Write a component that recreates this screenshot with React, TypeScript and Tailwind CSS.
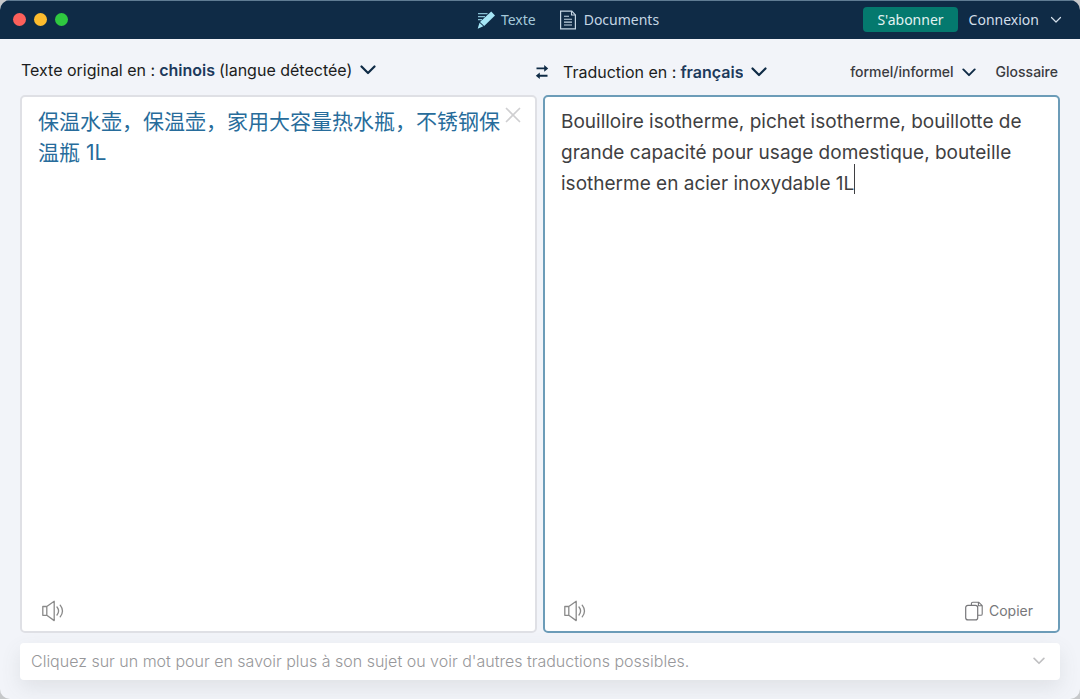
import { useState } from 'react';

type IconProps = { className?: string };

function Chevron({ className }: IconProps) {
  return (
    <svg viewBox="0 0 16 10" fill="none" stroke="currentColor" className={className} aria-hidden="true">
      <path d="M1.5 1.5 8 8l6.5-6.5" strokeWidth="2.2" strokeLinecap="round" strokeLinejoin="round" />
    </svg>
  );
}

function ThinChevron({ className }: IconProps) {
  return (
    <svg viewBox="0 0 12 8" fill="none" stroke="currentColor" className={className} aria-hidden="true">
      <path d="M1.5 1.5 6 6l4.5-4.5" strokeWidth="1.2" strokeLinecap="round" strokeLinejoin="round" />
    </svg>
  );
}

function PencilIcon({ className }: IconProps) {
  return (
    <svg viewBox="0 0 18 18" fill="none" className={className} aria-hidden="true">
      <path d="M1 2.7h9.5M1 5.7h7M1 8.7h4" stroke="currentColor" strokeWidth="1.2" opacity="0.8" />
      <path d="M14.2.6 18 4.4 7.2 15 3 11Z" fill="currentColor" />
      <path d="M2.5 11.8 6.3 15.3.7 17.7Z" fill="currentColor" />
    </svg>
  );
}

function DocumentIcon({ className }: IconProps) {
  return (
    <svg viewBox="0 0 16 20" fill="none" stroke="currentColor" className={className} aria-hidden="true">
      <path d="M.6 1.1h11.2l3.6 3.8v13.9H.6Z" strokeWidth="1.2" />
      <path d="M11.5 1.2V5h3.8" strokeWidth="1.1" />
      <path d="M4 6.3h5M4 9.2h8M4 12.1h8M4 15h8" strokeWidth="1.1" />
    </svg>
  );
}

function SwapIcon({ className }: IconProps) {
  return (
    <svg viewBox="0 0 14 14" className={className} aria-hidden="true">
      <path d="M1.5 3.4H10M4 10.8h8.5" stroke="currentColor" strokeWidth="1.9" fill="none" />
      <path d="M9.2 0 13.2 3.4 9.2 6.8ZM4.8 7.4.8 10.8l4 3.2Z" fill="currentColor" />
    </svg>
  );
}

function SpeakerIcon({ className }: IconProps) {
  return (
    <svg viewBox="0 0 22 22" fill="none" stroke="currentColor" className={className} aria-hidden="true">
      <path d="M.8 6.5h4v8.8h-4ZM4.8 6.5l7.4-5.2v19.3l-7.4-5.3" strokeWidth="1.3" strokeLinejoin="round" />
      <path d="M15 7c1.9 2.4 1.9 5.6 0 8M18.2 5.2c2.8 3.6 2.8 8.1 0 11.6" strokeWidth="1.3" strokeLinecap="round" />
    </svg>
  );
}

function CopyIcon({ className }: IconProps) {
  return (
    <svg viewBox="0 0 18 20" fill="none" stroke="currentColor" className={className} aria-hidden="true">
      <rect x=".7" y="4.3" width="12" height="14.6" rx="2.2" strokeWidth="1.2" />
      <path d="M6.4 4.2V2.6c0-.9.5-1.4 1.4-1.4h5.8l3.6 3.4v8.3c0 .9-.5 1.4-1.4 1.4h-3M13.4 1.4v3.3h3.6" strokeWidth="1.1" strokeLinejoin="round" />
    </svg>
  );
}

function CloseIcon({ className }: IconProps) {
  return (
    <svg viewBox="0 0 16 16" fill="none" stroke="currentColor" className={className} aria-hidden="true">
      <path d="m1.5 1.5 13 13M14.5 1.5l-13 13" strokeWidth="1.7" strokeLinecap="round" />
    </svg>
  );
}

function TitleBar() {
  return (
    <header className="grid h-[39px] shrink-0 grid-cols-[1fr_auto_1fr] items-center border-t border-[#5f7c93] bg-[#0f2b46] pb-px font-['Noto_Sans','Open_Sans',sans-serif] text-[14px] leading-5 text-[#c5d6e4]">
      <div className="flex gap-2 pl-[13px]">
        <button aria-label="Fermer" className="size-[13px] rounded-full bg-[#fc605b]" />
        <button aria-label="Réduire" className="size-[13px] rounded-full bg-[#fdbc2e]" />
        <button aria-label="Agrandir" className="size-[13px] rounded-full bg-[#2fc840]" />
      </div>
      <nav className="flex items-center gap-6 pl-14">
        <a href="#texte" className="flex items-center gap-1.5 text-[#a5c9da]">
          <PencilIcon className="size-[18px] text-[#a5e6f6]" />
          Texte
        </a>
        <a href="#documents" className="flex items-center gap-2">
          <DocumentIcon className="h-5 w-4" />
          Documents
        </a>
      </nav>
      <div className="flex items-center justify-end gap-[11px] pr-[18px]">
        <button className="h-[25px] rounded bg-[#04796e] px-3.5 text-[#e2f2f2]">S'abonner</button>
        <button className="flex items-center gap-[11px] text-[#d3dfea]">
          Connexion
          <ThinChevron className="h-2 w-3" />
        </button>
      </div>
    </header>
  );
}

export default function App() {
  const [source, setSource] = useState('保温水壶，保温壶，家用大容量热水瓶，不锈钢保温瓶 1L');
  const [target, setTarget] = useState(
    'Bouilloire isotherme, pichet isotherme, bouillotte de grande capacité pour usage domestique, bouteille isotherme en acier inoxydable 1L',
  );

  return (
    <div className="min-h-screen bg-[#c6c8ca] font-['Inter','Noto_Sans_CJK_SC',sans-serif]">
      <div className="flex min-h-screen flex-col overflow-hidden rounded-[10px] bg-[#f2f4f9]">
        <TitleBar />
        <main className="flex grow flex-col px-5 pb-[19px]">
          <div className="grid grow grid-cols-2 grid-rows-[56px_1fr] gap-x-1.5">
            <div className="flex items-center pt-2 pb-[3px] pl-px text-[16px] leading-5 text-[#1b1c20]">
              <label htmlFor="source-lang" className="mr-1">Texte original en :</label>
              <select id="source-lang" className="field-sizing-content appearance-none font-semibold text-[#1d3a5c]">
                <option>chinois</option>
              </select>
              <span className="ml-1">(langue détectée)</span>
              <Chevron className="ml-2 h-[10px] w-4 text-[#0f2b46]" />
            </div>

            <div className="flex items-center justify-between pt-[10px] pr-0.5 text-[#1b1c20]">
              <div className="-ml-2 flex items-center text-[16px] leading-5">
                <button aria-label="Inverser les langues" className="mr-3.5 text-[#0f2b46]">
                  <SwapIcon className="size-3.5" />
                </button>
                <label htmlFor="target-lang" className="mr-1">Traduction en :</label>
                <select id="target-lang" className="field-sizing-content appearance-none font-semibold text-[#1d3a5c]">
                  <option>français</option>
                </select>
                <Chevron className="ml-2 h-[10px] w-4 text-[#0f2b46]" />
              </div>
              <div className="flex items-center text-[14px] leading-5 font-medium text-[#3a3b40]">
                <select aria-label="Registre" className="field-sizing-content appearance-none">
                  <option>formel/informel</option>
                </select>
                <Chevron className="ml-2 h-[9px] w-3.5 text-[#0f2b46]" />
                <button className="ml-5">Glossaire</button>
              </div>
            </div>

            <section className="flex flex-col rounded-[5px] border-2 border-[#dfe0e5] bg-white pt-[9px] pr-3.5 pb-[9px] pl-4">
              <div className="flex grow items-start">
                <textarea
                  aria-label="Texte original"
                  value={source}
                  onChange={(e) => setSource(e.target.value)}
                  className="h-full grow resize-none self-stretch text-[21px] leading-[31px] text-[#276c9b] outline-none"
                />
                <button aria-label="Effacer le texte" onClick={() => setSource('')} className="ml-1 pt-px text-[#cfcfd1]">
                  <CloseIcon className="size-4" />
                </button>
              </div>
              <div className="flex items-center pl-1">
                <button aria-label="Écouter le texte original" className="text-[#8a8a8a]">
                  <SpeakerIcon className="size-[22px]" />
                </button>
              </div>
            </section>

            <section className="flex flex-col rounded-[5px] border-2 border-[#6c9cb8] bg-white pt-[9px] pr-[25px] pb-[9px] pl-4">
              <div className="relative flex grow">
                <textarea
                  aria-label="Traduction"
                  value={target}
                  onChange={(e) => setTarget(e.target.value)}
                  className="grow resize-none text-[19px] leading-[31px] text-[#3f3f42] outline-none"
                />
                <span className="absolute top-[58px] left-[293px] h-[30px] w-px bg-[#3f3f42]" />
              </div>
              <div className="flex items-center justify-between pl-[3px]">
                <button aria-label="Écouter la traduction" className="text-[#8a8a8a]">
                  <SpeakerIcon className="size-[22px]" />
                </button>
                <button className="flex items-center gap-1.5 text-[14px] leading-5 text-[#77777a]">
                  <CopyIcon className="h-5 w-[18px]" />
                  Copier
                </button>
              </div>
            </section>
          </div>

          <button className="mt-[10px] flex h-[37px] shrink-0 items-center justify-between rounded bg-white pr-[15px] pb-px pl-[11px] text-[16px] leading-5 font-light text-[#97979a] shadow-[0_8px_20px_rgba(90,100,95,0.12)]">
            Cliquez sur un mot pour en savoir plus à son sujet ou voir d'autres traductions possibles.
            <Chevron className="h-2 w-3 text-[#c0c0c2]" />
          </button>
        </main>
      </div>
    </div>
  );
}
